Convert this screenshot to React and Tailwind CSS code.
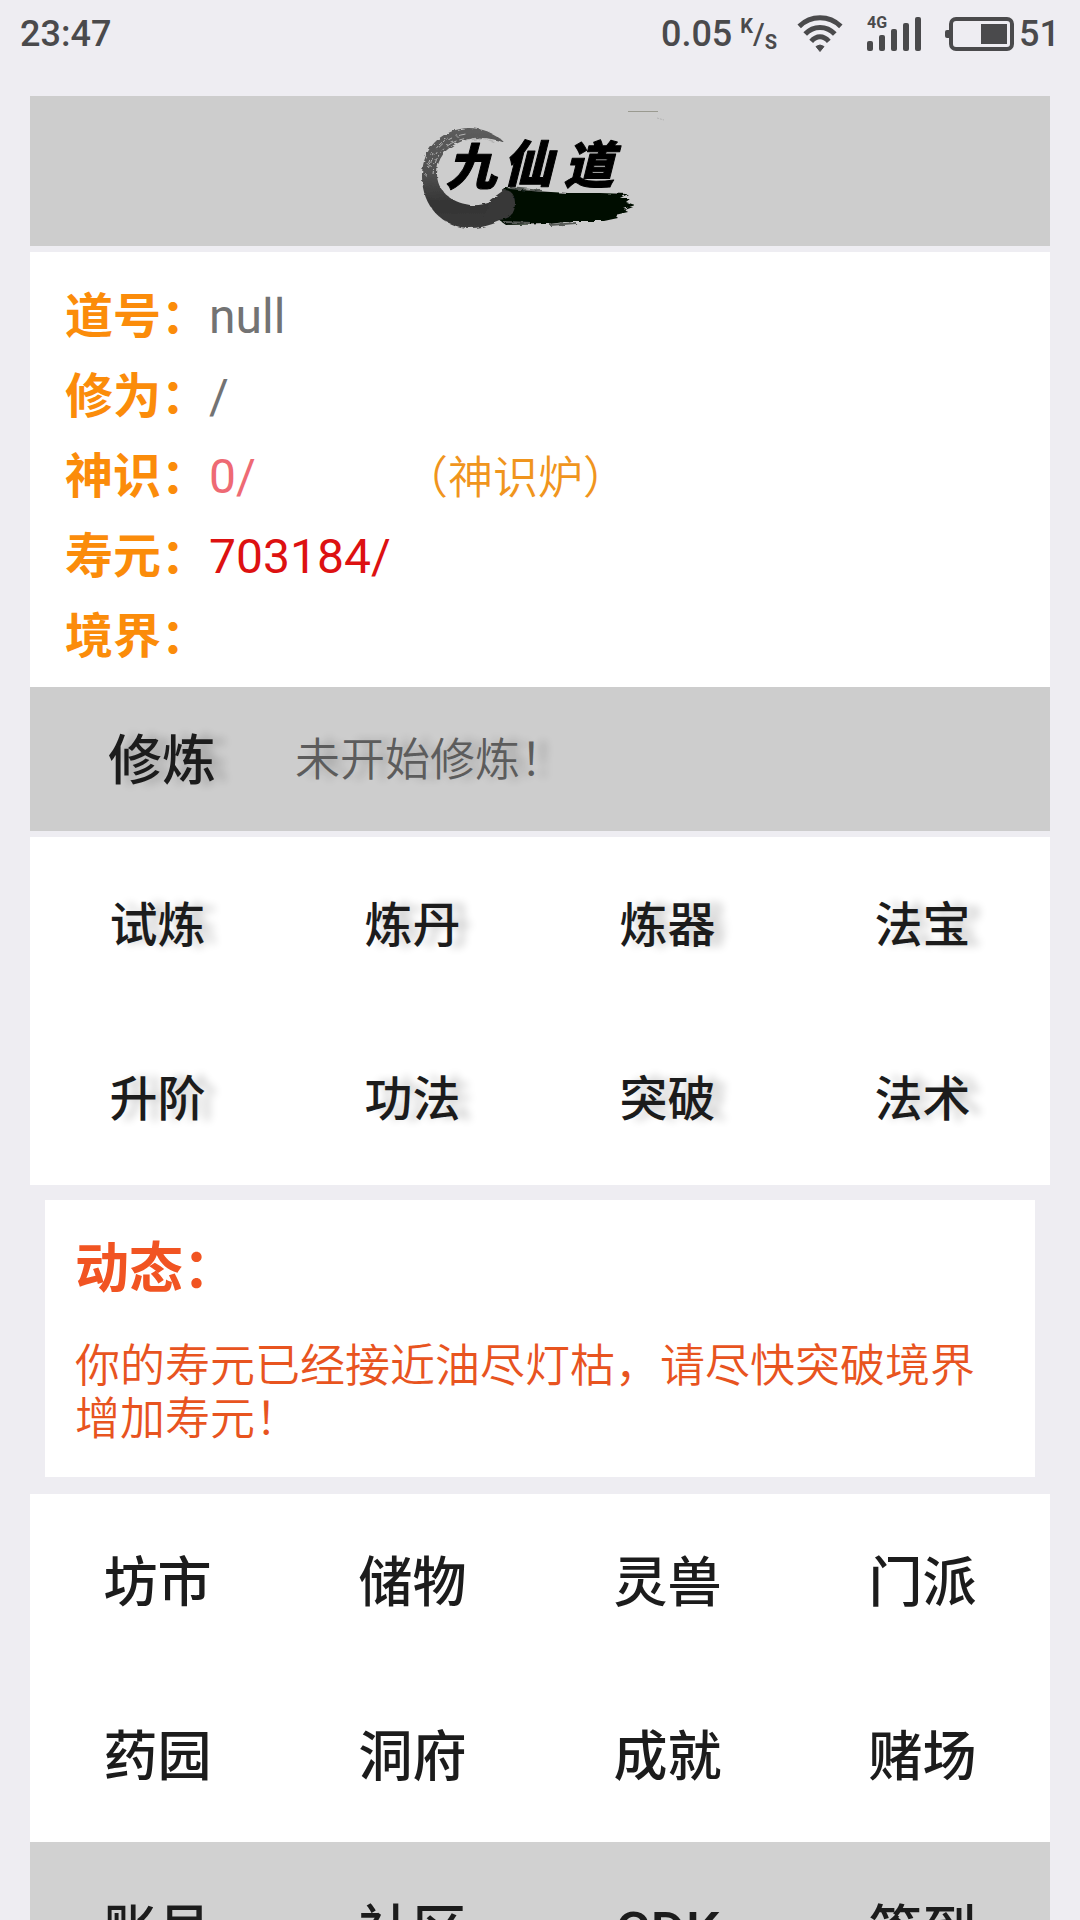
const STATS = [
  { label: "道号：", value: "null", color: "text-[#737373]" },
  { label: "修为：", value: "/", color: "text-[#737373]" },
  { label: "神识：", value: "0/", color: "text-[#ee6a74]", link: "（神识炉）" },
  { label: "寿元：", value: "703184/", color: "text-[#dd1111]" },
  { label: "境界：", value: "", color: "text-[#737373]" },
];

const TRAINING = ["试炼", "炼丹", "炼器", "法宝", "升阶", "功法", "突破", "法术"];
const PLACES = ["坊市", "储物", "灵兽", "门派", "药园", "洞府", "成就", "赌场"];
const FOOTER = ["账号", "社区", "CDK", "签到"];

const FONT = "font-[Roboto,'Noto_Sans_CJK_SC',sans-serif]";
const SHADOW = "text-shadow-[12px_0_8px_rgb(0_0_0/0.2)]";

function WifiIcon() {
  return (
    <svg width="46" height="38" viewBox="0 0 46 38" fill="none" stroke="#4a4a4c" strokeWidth="5">
      <path d="M2.2 11.4C14 0 32 0 43.8 11.4" />
      <path d="M8.2 19C16.5 10.2 29.5 10.2 37.8 19" />
      <path d="M14.2 26.4C19.5 20.2 26.5 20.2 31.8 26.4" />
      <path d="M19 31.5Q23 28.5 27 31.5L23 36.5Z" fill="#4a4a4c" strokeWidth="1" />
    </svg>
  );
}

function SignalIcon() {
  return (
    <svg width="54" height="36" viewBox="0 0 54 36" fill="#4a4a4c" className="overflow-visible">
      <text x="0" y="12" fontSize="16" fontWeight="700" fontFamily="Roboto, sans-serif">4G</text>
      <rect x="0" y="25" width="6" height="10" rx="2" />
      <rect x="12" y="19" width="6" height="16" rx="2" />
      <rect x="24" y="13" width="6" height="22" rx="2" />
      <rect x="36" y="7" width="6" height="28" rx="2" />
      <rect x="48" y="1" width="6" height="34" rx="2" />
    </svg>
  );
}

function BatteryIcon() {
  return (
    <svg width="70" height="36" viewBox="0 0 70 36" fill="#4a4a4c">
      <rect x="0" y="14" width="6" height="8" rx="2" />
      <rect x="6" y="3" width="61" height="30" rx="5" fill="none" stroke="#4a4a4c" strokeWidth="4" />
      <rect x="36" y="8" width="26" height="20" />
    </svg>
  );
}

function Logo() {
  return (
    <svg width="280" height="150" viewBox="0 6 280 150" role="img" aria-label="九仙道">
      <defs>
        <linearGradient id="ring" x1="0" y1="0" x2="0" y2="1">
          <stop offset="0" stopColor="#5c5c5c" />
          <stop offset="0.45" stopColor="#505050" />
          <stop offset="0.75" stopColor="#343434" />
          <stop offset="1" stopColor="#3a3a3a" />
        </linearGradient>
        <filter id="rough" x="-10%" y="-10%" width="120%" height="120%">
          <feTurbulence type="fractalNoise" baseFrequency="0.12 0.3" numOctaves="2" seed="4" />
          <feDisplacementMap in="SourceGraphic" scale="4" />
        </filter>
      </defs>
      <g filter="url(#rough)">
        <path
          d="M105 53C92 40 74 36 60 39C36 44 22 62 22 87C22 116 43 138 70 138C86 138 98 132 112 126L105 102C96 112 84 116 70 115C50 112 37 100 37 84C37 68 46 58 58 53C70 47 88 46 105 53Z"
          fill="url(#ring)"
        />
        <g fill="none" stroke="#b4b4b4" strokeWidth="1">
          <path d="M30 76C34 58 46 47 66 44" strokeDasharray="9 3 4 5" />
          <path d="M33 84C35 62 48 51 68 48" strokeDasharray="5 4 11 3" />
          <path d="M26 86C28 66 38 52 52 46" strokeDasharray="3 6 8 4" />
          <path d="M66 51C76 47 86 48 96 53" strokeDasharray="4 2" strokeWidth="2" />
        </g>
        <path
          d="M100 104L106 98L116 99L134 101L168 103L200 103L228 104L220 108L231 108L226 112L235 115L224 119L228 122L215 125L218 128L204 131L172 131L150 134L106 135L96 128Z"
          fill="#020e05"
        />
        <path d="M110 98L142 101M104 132L130 133M150 135L176 133" stroke="#565a56" strokeWidth="2" />
        <path d="M90 110L104 100Q115 100 115 114Q115 129 98 130L82 132Z" fill="#383838" />
      </g>
      <text
        x="46 103 164"
        y="95 92 93"
        fontSize="50"
        fontWeight="900"
        fontStyle="italic"
        fontFamily="'Noto Sans CJK SC', sans-serif"
        stroke="#000"
        strokeWidth="1"
        strokeLinejoin="round"
      >
        九仙道
      </text>
      <path d="M228 21.5H258" stroke="#9a9a90" />
      <path d="M257 28L264 30" stroke="#b4b4b4" strokeDasharray="2 1" />
    </svg>
  );
}

function StatusBar() {
  return (
    <div className="flex h-17 items-center justify-between px-5 text-4xl font-medium text-[#4a4a4c]">
      <span>23:47</span>
      <div className="flex items-center">
        <span>0.05</span>
        <span className="ml-2 flex h-9 text-xl leading-5 font-bold">
          <span>K</span>
          <span className="self-center text-3xl font-medium">/</span>
          <span className="self-end">S</span>
        </span>
        <span className="ml-5 flex items-center gap-6">
          <WifiIcon />
          <SignalIcon />
          <BatteryIcon />
        </span>
        <span className="ml-1">51</span>
      </div>
    </div>
  );
}

function MenuGrid({ items, className, buttonClass = "" }) {
  return (
    <div className={`grid grid-cols-4 font-medium text-[#1c1c1c] ${className}`}>
      {items.map((item) => (
        <button key={item} type="button" className={`h-[174px] pt-1 ${buttonClass}`}>
          {item}
        </button>
      ))}
    </div>
  );
}

export default function App() {
  return (
    <div lang="zh-CN" className={`h-screen overflow-y-auto bg-[#eeedf2] [scrollbar-width:none] ${FONT}`}>
      <StatusBar />

      <main className="px-[30px] pt-7">
        <header className="flex justify-center bg-[#cdcdcd]">
          <Logo />
        </header>

        <section className="mt-1.5 bg-white px-[35px] pt-[25px] pb-2.5">
          {STATS.map((stat) => (
            <div key={stat.label} className="flex h-20 items-center text-5xl">
              <span className="font-bold text-[#fb8c0a]">{stat.label}</span>
              <span className={`min-w-[194px] ${stat.color}`}>{stat.value}</span>
              {stat.link && (
                <a href="#furnace" className="pt-0.5 text-[45px] font-[350] text-[#f0951d]">{stat.link}</a>
              )}
            </div>
          ))}
        </section>

        <section className="flex h-36 items-center bg-[#cdcdcd] pt-1 pl-[78px]">
          <button type="button" className={`text-[54px] font-medium text-[#1c1c1c] ${SHADOW}`}>
            修炼
          </button>
          <span className={`ml-[79px] text-[45px] font-[350] text-[#5c5c5c] ${SHADOW}`}>未开始修炼！</span>
        </section>

        <MenuGrid items={TRAINING} className="mt-1.5 bg-white text-5xl" buttonClass={SHADOW} />

        <section className="mx-[15px] mt-[15px] bg-white px-[30px] pt-[30px] pb-[31px]">
          <h2 className="text-[54px] leading-[80px] font-bold text-[#f15422]">动态：</h2>
          <p className="mt-[30px] text-[45px] leading-[53px] font-[350] text-[#e8541f]">
            你的寿元已经接近油尽灯枯，请尽快突破境界增加寿元！
          </p>
        </section>

        <MenuGrid items={PLACES} className="mt-[17px] bg-white text-[54px]" />
        <MenuGrid items={FOOTER} className="bg-[#d1d1d1] text-[54px]" />
      </main>
    </div>
  );
}
